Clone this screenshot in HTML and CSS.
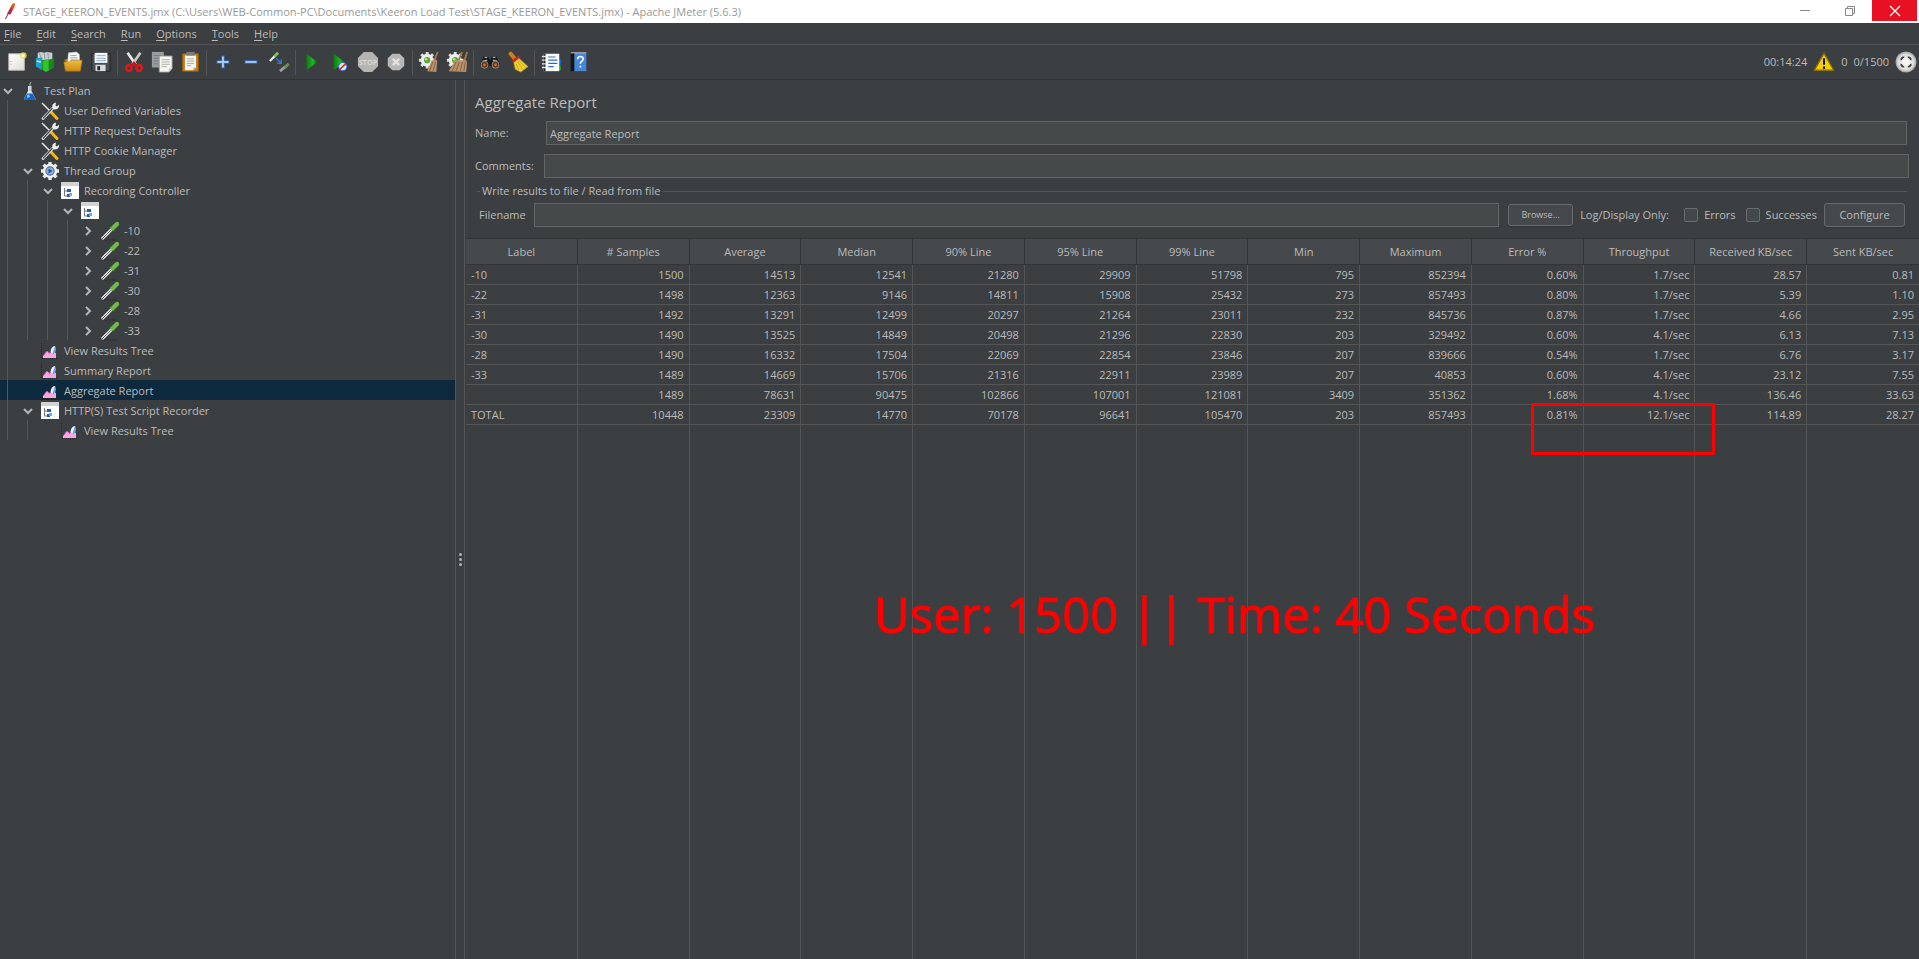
FILE: index.html
```html
<!DOCTYPE html>
<html lang="en">
<head>
<meta charset="utf-8">
<title>Apache JMeter (5.6.3)</title>
<link rel="stylesheet" href="styles.css">
</head>
<body>
<svg class="defs" aria-hidden="true">
  <defs>
    <linearGradient id="g-green" x1="0" x2="1"><stop offset="0" stop-color="#0b7a12"/><stop offset=".6" stop-color="#1fb52a"/><stop offset="1" stop-color="#0a5c10"/></linearGradient>
    <linearGradient id="g-folder" x1="0" y1="0" x2="0" y2="1"><stop offset="0" stop-color="#f0bd45"/><stop offset="1" stop-color="#c98d10"/></linearGradient>
    <linearGradient id="g-paper" x1="0" y1="0" x2="1" y2="1"><stop offset="0" stop-color="#ffffff"/><stop offset="1" stop-color="#dcdcd8"/></linearGradient>
    <linearGradient id="g-feather" x1="0" y1="1" x2="1" y2="0"><stop offset="0" stop-color="#8a2a7c"/><stop offset=".45" stop-color="#d4202e"/><stop offset="1" stop-color="#f08a24"/></linearGradient>
    <radialGradient id="g-ball"><stop offset="0" stop-color="#ffffff"/><stop offset=".75" stop-color="#dadada"/><stop offset="1" stop-color="#9a9a9a"/></radialGradient>
  </defs>
  <symbol id="i-flask" viewBox="0 0 18 20"><path d="M7 5h3.500v5l4 7.500q.5 1.500-1 1.500H4q-1.500 0-1-1.500l4-7.500z" fill="#dfe6ee"/><path d="M6 12.500h5.500l3 5q.5 1.500-1 1.500H4q-1.500 0-1-1.500z" fill="#1767c4"/><path d="M6 14l2-1 1 3-3 1z" fill="#7ab4f2"/><path d="M9 10V3l1-2" stroke="#aab4c0" stroke-width="1" fill="none"/></symbol>
  <symbol id="i-tools" viewBox="0 0 20 20"><path d="M2 2l8 8" stroke="#f0f0f0" stroke-width="1.500"/><path d="M10.500 10.500l6.500 7" stroke="#f4b90a" stroke-width="3" stroke-linecap="round"/><path d="M3 17.500l10.500-11" stroke="#e6e6e6" stroke-width="2.800" stroke-linecap="round"/><path d="M3 17.500l9.500-10.500" stroke="#45494b" stroke-width="1.200"/><path d="M12.500 6.500q-1-4 3.500-5l-.5 3 1.500 1 2-2q.5 5-4.500 5z" fill="#eee"/></symbol>
  <symbol id="i-cog" viewBox="0 0 20 20"><path d="M10 1v18M1 10h18M3.600 3.600l12.800 12.800M16.400 3.600L3.600 16.400" stroke="#e9e9e9" stroke-width="3.400"/><circle cx="10" cy="10" r="7.200" fill="#f1f1f1"/><circle cx="10" cy="10" r="4.700" fill="#5c6f92"/><circle cx="10" cy="10" r="3.600" fill="#8fb0e6"/><path d="M8.500 7.500l4 2.500-4 2.500z" fill="#1d4fa5"/></symbol>
  <symbol id="i-control" viewBox="0 0 20 20"><path d="M1 1h18v17H1z" fill="#fff"/><path d="M1 1h18v4H1z" fill="#d2d2d2"/><path d="M4.500 7v8H8M4.500 10H8" stroke="#777" fill="none"/><path d="M7 8h4v3H7zM7 13h3v3H7z" fill="#1e5fb8"/><path d="M9 12h3v3H9z" fill="#6ea6e8"/></symbol>
  <symbol id="i-sampler" viewBox="0 0 20 20"><path d="M3 19h14" stroke="#2c2f30"/><path d="M2 18L12 8" stroke="#f2f2f2" stroke-width="3"/><path d="M1.500 18.500l9.500-9.500" stroke="#666" stroke-width="1"/><path d="M10 6l4 4" stroke="#3f7a26" stroke-width="1.800"/><path d="M12.500 7.500L17 3" stroke="#73b94c" stroke-width="4.200" stroke-linecap="round"/></symbol>
  <symbol id="i-chart" viewBox="0 0 20 20"><path d="M1.500 2v15.500H17" stroke="#25282a" stroke-dasharray="1 1" fill="none"/><path d="M3 17v-2l4-5 3 2 2-2 4 2v5z" fill="#f5a9e4"/><path d="M3 15l4-5 3 3" stroke="#d04cae" fill="none"/><path d="M10.500 11q.5-5.500 4.500-6 1.500 6-1.500 8.500z" fill="#e9f2ff"/><path d="M15 5q1.500 6-1.500 8.500l-1-1z" fill="#6d9ede"/></symbol>
  <symbol id="i-down" viewBox="0 0 12 12"><path d="M2 4l4 4 4-4" fill="none" stroke="#b4b7b9" stroke-width="2"/></symbol>
  <symbol id="i-right" viewBox="0 0 12 12"><path d="M4 2l4 4-4 4" fill="none" stroke="#b4b7b9" stroke-width="2"/></symbol>
  <symbol id="i-smallcog" viewBox="0 0 24 24"><path d="M10 1v18M1 10h18M3.600 3.600l12.800 12.800M16.400 3.600L3.600 16.400" stroke="#dedede" stroke-width="3.200"/><circle cx="10" cy="10" r="7" fill="#ededed"/><circle cx="10" cy="10" r="3.400" fill="#5aa832"/><circle cx="9" cy="9" r="1.400" fill="#b5e08f"/></symbol>
</svg>

<header class="titlebar">
  <svg class="logo" viewBox="0 0 12 18"><path d="M3 12L8.500 1.500Q12 0 11 3.500L6.500 12.500z" fill="url(#g-feather)"/><path d="M4 12l-2.500 5" stroke="#6a2575" stroke-width="1"/></svg>
  <h1 class="window-title">STAGE_KEERON_EVENTS.jmx (C:\Users\WEB-Common-PC\Documents\Keeron Load Test\STAGE_KEERON_EVENTS.jmx) - Apache JMeter (5.6.3)</h1>
  <button class="win" aria-label="Minimize"><svg viewBox="0 0 12 12"><path d="M1 5.500h10" stroke="#888"/></svg></button>
  <button class="win" aria-label="Restore"><svg viewBox="0 0 12 12"><path d="M1.500 3.500h7v7h-7zM3.500 3.500v-2h7v7h-2" fill="none" stroke="#888"/></svg></button>
  <button class="win close" aria-label="Close"><svg viewBox="0 0 12 12"><path d="M1 1l10 10M11 1L1 11" stroke="#fff" stroke-width="1.300"/></svg></button>
</header>

<nav class="menu">
  <button><u>F</u>ile</button><button><u>E</u>dit</button><button><u>S</u>earch</button><button><u>R</u>un</button><button><u>O</u>ptions</button><button><u>T</u>ools</button><button><u>H</u>elp</button>
</nav>

<div class="toolbar">
  <button aria-label="New"><svg viewBox="0 0 24 24"><path d="M3 3h17v18H3z" fill="url(#g-paper)" stroke="#b9b9b5"/><path d="M5.500 11v1M5.500 14v1" stroke="#999"/><circle cx="19" cy="5" r="3.600" fill="#f3e04a" opacity=".8"/><circle cx="19" cy="5" r="1.700" fill="#fffbd0"/></svg></button>
  <button aria-label="Templates"><svg viewBox="0 0 24 24"><path d="M4 2l4-1 3 1 3-1 6 1v8H4z" fill="#c9ced2"/><path d="M6 2l2 7M11 2l1 7M15 2l1 7" stroke="#8d979e"/><path d="M2 8l7-1v14l-7-4z" fill="#1b9fcf"/><path d="M3 10l5 1v2l-5-1z" fill="#a7e2f6"/><path d="M8 10l8-1v13l-8-2z" fill="#1d9c22"/><path d="M10 11l11-3v10l-8 5-3-2z" fill="#36c12f"/><path d="M16 10l5-2v10l-5 3z" fill="#158a1c"/></svg></button>
  <button aria-label="Open"><svg viewBox="0 0 24 24"><path d="M3 9h3l1-2h12l1 14H3z" fill="#b97d0c"/><path d="M7 2l9-1 3 3v10H6z" fill="#fafafa" stroke="#bbb" stroke-width=".6"/><path d="M9 5h7M9 7.500h8M9 10h8" stroke="#999" stroke-width="1"/><path d="M2 12h6l2-2h12l-2 12H4z" fill="url(#g-folder)" stroke="#a8720b" stroke-width=".6"/></svg></button>
  <button aria-label="Save"><svg viewBox="0 0 24 24"><path d="M2 3h20v19H4l-2-2z" fill="#4b4e52" stroke="#222"/><path d="M5 2h14v11H5z" fill="#f3f6fa"/><path d="M7 5h10M7 8h10M7 10.500h10" stroke="#8caad0" stroke-width="1"/><path d="M6 15h11v7H6z" fill="#d9dcdf"/><path d="M8 16.500h3V21H8z" fill="#26282a"/></svg></button>
  <span class="sep"></span>
  <button aria-label="Cut"><svg viewBox="0 0 24 24"><path d="M5 2l9 13" stroke="#e9e9e9" stroke-width="3"/><path d="M19 2l-9 13" stroke="#c9c9c9" stroke-width="3"/><ellipse cx="6.500" cy="18.500" rx="3" ry="3.300" fill="none" stroke="#e01818" stroke-width="2.600"/><ellipse cx="17.500" cy="18.500" rx="3" ry="3.300" fill="none" stroke="#e01818" stroke-width="2.600"/><path d="M9 16l3-3 3 3" stroke="#c01010" stroke-width="2.400" fill="none"/></svg></button>
  <button aria-label="Copy"><svg viewBox="0 0 24 24"><path d="M1 1h13v17H1z" fill="#9a9c9d"/><path d="M3 5h9M3 8h6M3 11h5M3 14h5" stroke="#77797b"/><path d="M9 5.500h14V19l-3.500 4H9z" fill="#f5f5f2" stroke="#999"/><path d="M11.500 9.500h9M11.500 12h9M11.500 14.500h9M11.500 17h6" stroke="#a9a9a9"/><path d="M19.500 23v-4H23z" fill="#c4c4c4"/></svg></button>
  <button aria-label="Paste"><svg viewBox="0 0 24 24"><path d="M4 3h17v19H4z" fill="#c4811c" stroke="#99600c"/><path d="M6.500 5h12v13l-3 3h-9z" fill="#f6f6f3"/><path d="M8 1h9v4H8z" fill="#7b7e78"/><path d="M8.500 8.500h8M8.500 11h8M8.500 13.500h8M8.500 16h5" stroke="#a5a5a5"/><path d="M15.500 21v-3h3z" fill="#bbb"/></svg></button>
  <span class="sep"></span>
  <button aria-label="Expand all"><svg viewBox="0 0 24 24"><path d="M12 5v14M5 12h14" stroke="#3768b0" stroke-width="4"/><path d="M12 6v12M6 12h12" stroke="#a9ccf6" stroke-width="2"/></svg></button>
  <button aria-label="Collapse all"><svg viewBox="0 0 24 24"><path d="M5 12h14" stroke="#3768b0" stroke-width="4"/><path d="M6 12h12" stroke="#a9ccf6" stroke-width="2"/></svg></button>
  <button aria-label="Toggle"><svg viewBox="0 0 24 24"><path d="M2 11l6-6" stroke="#eee" stroke-width="2.400"/><path d="M7 6l4-4" stroke="#7cc057" stroke-width="3.200"/><path d="M9 8l5 5M14.500 9v4.500H10" stroke="#2f78d8" stroke-width="1.500" fill="none"/><path d="M13 22l6-5" stroke="#999c9e" stroke-width="3"/><path d="M18.500 18l4-4" stroke="#6b9158" stroke-width="3.200"/></svg></button>
  <span class="sep"></span>
  <button aria-label="Start"><svg viewBox="0 0 24 24"><path d="M6 3l12 9-12 9z" fill="url(#g-green)"/></svg></button>
  <button aria-label="Start no pauses"><svg viewBox="0 0 24 24"><path d="M5 3l12 9-12 9z" fill="url(#g-green)"/><circle cx="15" cy="17" r="4.500" fill="#d6e6fb" stroke="#2a6ed0" stroke-width="1"/><path d="M11.500 20.500l7-7" stroke="#e02222" stroke-width="1.600"/></svg></button>
  <button aria-label="Stop"><svg viewBox="0 0 24 24"><path d="M7.500 1h9L23 7.500v9L16.500 23h-9L1 16.500v-9z" fill="#b4b4b4"/><text x="12" y="15" class="stop-text">STOP</text></svg></button>
  <button aria-label="Shutdown"><svg viewBox="0 0 24 24"><path d="M8 3h8l5 5v8l-5 5H8l-5-5V8z" fill="#b7b7b7"/><path d="M8.500 8.500l7 7M15.500 8.500l-7 7" stroke="#e2e2e2" stroke-width="2.600"/></svg></button>
  <span class="sep"></span>
  <button aria-label="Clear"><svg viewBox="0 0 24 24"><use href="#i-smallcog"/><path d="M21.500 1l-4 10" stroke="#a37846" stroke-width="2"/><path d="M15 10h6l-1 13-10-1z" fill="#b8926a"/><path d="M16 12l-3.500 10M19 12l-2.500 10" stroke="#84603a"/></svg></button>
  <button aria-label="Clear all"><svg viewBox="0 0 24 24"><use href="#i-smallcog"/><path d="M17.500 1l-3.500 9M23 1l-3 10" stroke="#a37846" stroke-width="2"/><path d="M10 10h12l1 3-1 10-19-1z" fill="#b8926a"/><path d="M11 12L6.500 22M14.500 12l-3.500 10M18 12l-2.500 10M21 12l-1.500 10" stroke="#84603a"/></svg></button>
  <span class="sep"></span>
  <button aria-label="Search"><svg viewBox="0 0 24 24"><path d="M5 6h5l1 3h2l1-3h5l4 9-5 4-5-3h-2l-5 3-5-4z" fill="#17191a"/><path d="M6 7h3M15 7h3M4 11l5-1M15 10l5 1" stroke="#a9adb0" stroke-width="1.300"/><circle cx="6" cy="15" r="3.800" fill="#6b3717" stroke="#8a8e91"/><circle cx="18" cy="15" r="3.800" fill="#6b3717" stroke="#8a8e91"/><circle cx="6" cy="15" r="1.500" fill="#c96f36"/><circle cx="18" cy="15" r="1.500" fill="#c96f36"/></svg></button>
  <button aria-label="Reset search"><svg viewBox="0 0 24 24"><path d="M4 3l5 6" stroke="#cb8119" stroke-width="4.500" stroke-linecap="round"/><path d="M7 11l5-4 11 10-8 6-6-3z" fill="#f0d131" stroke="#b79413" stroke-width=".8"/><path d="M12 12l5 8M13 10l7 8M10 14l3 7" stroke="#c5a41c"/><path d="M6 12l7-6" stroke="#d3201c" stroke-width="3"/></svg></button>
  <span class="sep"></span>
  <button aria-label="Function helper"><svg viewBox="0 0 24 24"><path d="M20 9h3v6h-3z" fill="#1462cf"/><path d="M20 16h3v5h-3z" fill="#17992a"/><path d="M4 3h17v19H4z" fill="#fff"/><path d="M4 3h2v19H4z" fill="#1d1e20"/><path d="M2 6h5M2 10h5M2 14h5M2 18h5" stroke="#e8e8e8" stroke-width="1.500"/><path d="M9 6.500h8M9 10h10M9 13.500h10M9 17h6" stroke="#2c6cc8" stroke-width="1.200"/></svg></button>
  <button aria-label="Help"><svg viewBox="0 0 24 24"><path d="M3 2h4v20H3z" fill="#131517"/><path d="M7 2h13v20H7z" fill="#4686da"/><path d="M3 2h17" stroke="#ccd3da"/><path d="M10.500 9q0-3 3-3t3 2.700q0 1.800-1.800 2.800-1.200.7-1.200 2.500M13.500 16v2" fill="none" stroke="#fff" stroke-width="1.700"/></svg></button>
  <div class="status">
    <span>00:14:24</span>
    <svg viewBox="0 0 24 24"><path d="M12 2.500L22.500 21h-21z" fill="#f3cc0a" stroke="#8c7200" stroke-width="1.500" stroke-linejoin="round"/><path d="M12 8v7M12 17v2.500" stroke="#151515" stroke-width="2.200"/></svg>
    <span>0</span>
    <span>0/1500</span>
    <svg viewBox="0 0 24 24"><circle cx="12" cy="12" r="11.500" fill="url(#g-ball)"/><path d="M6.500 10V8L8 6.500h2zM14 6.500h2L17.500 8v2zM17.500 14v2L16 17.500h-2zM10 17.500H8L6.500 16v-2z" fill="#3e4143" stroke="#3e4143"/></svg>
  </div>
</div>

<main class="main">
  <ul class="tree">
    <li><svg class="tw"><use href="#i-down"/></svg><svg class="ic"><use href="#i-flask"/></svg>Test Plan</li>
    <li><i></i><svg class="ic"><use href="#i-tools"/></svg>User Defined Variables</li>
    <li><i></i><svg class="ic"><use href="#i-tools"/></svg>HTTP Request Defaults</li>
    <li><i></i><svg class="ic"><use href="#i-tools"/></svg>HTTP Cookie Manager</li>
    <li><i></i><svg class="tw"><use href="#i-down"/></svg><svg class="ic"><use href="#i-cog"/></svg>Thread Group</li>
    <li><i></i><i></i><svg class="tw"><use href="#i-down"/></svg><svg class="ic"><use href="#i-control"/></svg>Recording Controller</li>
    <li><i></i><i></i><i></i><svg class="tw"><use href="#i-down"/></svg><svg class="ic"><use href="#i-control"/></svg></li>
    <li><i></i><i></i><i></i><i></i><svg class="tw"><use href="#i-right"/></svg><svg class="ic"><use href="#i-sampler"/></svg>-10</li>
    <li><i></i><i></i><i></i><i></i><svg class="tw"><use href="#i-right"/></svg><svg class="ic"><use href="#i-sampler"/></svg>-22</li>
    <li><i></i><i></i><i></i><i></i><svg class="tw"><use href="#i-right"/></svg><svg class="ic"><use href="#i-sampler"/></svg>-31</li>
    <li><i></i><i></i><i></i><i></i><svg class="tw"><use href="#i-right"/></svg><svg class="ic"><use href="#i-sampler"/></svg>-30</li>
    <li><i></i><i></i><i></i><i></i><svg class="tw"><use href="#i-right"/></svg><svg class="ic"><use href="#i-sampler"/></svg>-28</li>
    <li><i></i><i></i><i></i><i></i><svg class="tw"><use href="#i-right"/></svg><svg class="ic"><use href="#i-sampler"/></svg>-33</li>
    <li><i></i><svg class="ic"><use href="#i-chart"/></svg>View Results Tree</li>
    <li><i></i><svg class="ic"><use href="#i-chart"/></svg>Summary Report</li>
    <li class="selected"><i></i><svg class="ic"><use href="#i-chart"/></svg>Aggregate Report</li>
    <li><i></i><svg class="tw"><use href="#i-down"/></svg><svg class="ic"><use href="#i-control"/></svg>HTTP(S) Test Script Recorder</li>
    <li><i></i><i></i><svg class="ic"><use href="#i-chart"/></svg>View Results Tree</li>
  </ul>

  <div class="splitter"><b></b><b></b><b></b></div>

  <section class="panel">
    <form class="form">
      <h2>Aggregate Report</h2>
      <div class="field name"><label for="name">Name:</label><input type="text" id="name" value="Aggregate Report"></div>
      <div class="field comments"><label for="comments">Comments:</label><input type="text" id="comments"></div>
      <fieldset>
        <legend>Write results to file / Read from file</legend>
        <div class="file-row">
          <label for="filename">Filename</label><input type="text" id="filename">
          <button type="button" class="btn browse">Browse...</button>
          <span class="log">Log/Display Only:</span>
          <label class="check"><input type="checkbox">Errors</label>
          <label class="check"><input type="checkbox">Successes</label>
          <button type="button" class="btn configure">Configure</button>
        </div>
      </fieldset>
    </form>
    <div class="results">
      <table>
        <thead><tr><th>Label</th><th># Samples</th><th>Average</th><th>Median</th><th>90% Line</th><th>95% Line</th><th>99% Line</th><th>Min</th><th>Maximum</th><th>Error %</th><th>Throughput</th><th>Received KB/sec</th><th>Sent KB/sec</th></tr></thead>
        <tbody>
          <tr><td>-10</td><td>1500</td><td>14513</td><td>12541</td><td>21280</td><td>29909</td><td>51798</td><td>795</td><td>852394</td><td>0.60%</td><td>1.7/sec</td><td>28.57</td><td>0.81</td></tr>
          <tr><td>-22</td><td>1498</td><td>12363</td><td>9146</td><td>14811</td><td>15908</td><td>25432</td><td>273</td><td>857493</td><td>0.80%</td><td>1.7/sec</td><td>5.39</td><td>1.10</td></tr>
          <tr><td>-31</td><td>1492</td><td>13291</td><td>12499</td><td>20297</td><td>21264</td><td>23011</td><td>232</td><td>845736</td><td>0.87%</td><td>1.7/sec</td><td>4.66</td><td>2.95</td></tr>
          <tr><td>-30</td><td>1490</td><td>13525</td><td>14849</td><td>20498</td><td>21296</td><td>22830</td><td>203</td><td>329492</td><td>0.60%</td><td>4.1/sec</td><td>6.13</td><td>7.13</td></tr>
          <tr><td>-28</td><td>1490</td><td>16332</td><td>17504</td><td>22069</td><td>22854</td><td>23846</td><td>207</td><td>839666</td><td>0.54%</td><td>1.7/sec</td><td>6.76</td><td>3.17</td></tr>
          <tr><td>-33</td><td>1489</td><td>14669</td><td>15706</td><td>21316</td><td>22911</td><td>23989</td><td>207</td><td>40853</td><td>0.60%</td><td>4.1/sec</td><td>23.12</td><td>7.55</td></tr>
          <tr><td></td><td>1489</td><td>78631</td><td>90475</td><td>102866</td><td>107001</td><td>121081</td><td>3409</td><td>351362</td><td>1.68%</td><td>4.1/sec</td><td>136.46</td><td>33.63</td></tr>
          <tr><td>TOTAL</td><td>10448</td><td>23309</td><td>14770</td><td>70178</td><td>96641</td><td>105470</td><td>203</td><td>857493</td><td>0.81%</td><td>12.1/sec</td><td>114.89</td><td>28.27</td></tr>
          <tr class="filler"><td></td><td></td><td></td><td></td><td></td><td></td><td></td><td></td><td></td><td></td><td></td><td></td><td></td></tr>
        </tbody>
      </table>
      <div class="mark"></div>
      <p class="note">User: 1500 || Time: 40 Seconds</p>
    </div>
  </section>
</main>
</body>
</html>
```
FILE: styles.css
```css
* { box-sizing: border-box; }

body {
  margin: 0;
  height: 100vh;
  display: flex;
  flex-direction: column;
  overflow: hidden;
  background: #3c3f41;
  color: #bbbbbb;
  font: 11px/20px "Open Sans", sans-serif;
}

button, input { font: inherit; color: inherit; margin: 0; }
button { background: none; border: 0; padding: 0; }
svg { display: block; flex: none; }
.defs { position: absolute; width: 0; height: 0; }

.titlebar {
  display: flex;
  align-items: flex-start;
  height: 23px;
  padding-right: 2px;
  background: #fff;
  color: #999;
}
.logo { width: 12px; height: 18px; margin: 2px 7px 0 4px; }
.window-title { flex: 1; margin: 2px 0 0; font-size: 11px; font-weight: 400; white-space: nowrap; }
.win { width: 45px; height: 21px; display: grid; place-items: center; }
.win svg { width: 12px; height: 12px; }
.close { background: #e81123; }

.menu {
  display: flex;
  gap: 15px;
  height: 22px;
  padding-left: 4px;
  border-bottom: 1px solid #555555;
}
.menu button { line-height: 21px; }
.menu u { text-underline-offset: 2px; }

.toolbar {
  display: flex;
  align-items: center;
  height: 35px;
  padding: 0 2px 0 3px;
  border-bottom: 1px solid #323232;
}
.toolbar button { width: 28px; height: 28px; display: grid; place-items: center; }
.toolbar svg { width: 22px; height: 22px; }
.sep { width: 3px; height: 25px; margin-left: 2px; border-left: 1px solid #555555; }
.status { margin-left: auto; display: flex; align-items: center; gap: 6px; }
.stop-text { font: 700 8px "Open Sans", sans-serif; fill: #d6d6d6; text-anchor: middle; }

.main { flex: 1; display: flex; min-height: 0; }

.tree {
  width: 455px;
  flex: none;
  margin: 0;
  padding: 0;
  list-style: none;
}
.tree li { display: flex; align-items: center; height: 20px; padding-top: 2px; white-space: nowrap; }
.tree i {
  width: 20px;
  flex: none;
  align-self: stretch;
  margin-top: -2px;
  background: linear-gradient(#555759, #555759) 7px 0 / 1px 100% no-repeat;
}
.tree .tw { width: 12px; height: 12px; margin: 0 6px 0 2px; }
.tree .ic { width: 20px; height: 20px; margin-right: 4px; }
.tree i + .ic { margin-left: 20px; }
.tree .selected { background: #0d293e; }

.splitter {
  width: 10px;
  flex: none;
  display: flex;
  flex-direction: column;
  align-items: center;
  justify-content: center;
  gap: 2px;
  padding-top: 80px;
  border: solid #555555;
  border-width: 0 1px;
}
.splitter b { width: 3px; height: 3px; border-radius: 50%; background: #b0b3b5; }

.panel { flex: 1; min-width: 0; display: flex; flex-direction: column; padding-left: 1px; }
.form { padding: 10px 12px 0 9px; }
.form h2 { margin: 0 0 7px; font-size: 15px; line-height: 24px; font-weight: 400; }
.form input[type="text"] {
  flex: 1;
  min-width: 0;
  height: 24px;
  padding: 0 3px;
  border: 1px solid #646464;
  background: #45494a;
}
.field { display: flex; align-items: center; margin-bottom: 9px; }
.field.name label { width: 71px; }
.field.comments label { width: 69px; }
.field.comments { margin-right: -2px; margin-bottom: 3px; }

fieldset { margin: 0 0 0 2px; padding: 0 2px 11px; border: 0 solid #555555; border-top-width: 1px; min-width: 0; }
legend { padding: 0 2px; margin-left: 1px; line-height: 20px; }
.file-row { display: flex; align-items: center; padding-top: 2px; }
.file-row > label:first-child { width: 55px; }
.btn { border: 1px solid #686b6d; border-radius: 3px; background: #45494c; box-shadow: 0 1px 1px #333638; }
.browse { width: 65px; height: 22px; margin: 0 7px 0 9px; font-size: 9px; line-height: 18px; }
.log { width: 104px; }
.check { display: flex; align-items: center; }
.check input {
  appearance: none;
  width: 14px;
  height: 14px;
  margin-right: 6px;
  border: 1px solid #6b6b6b;
  border-radius: 2px;
  background: #43494a;
}
.check + .check { margin: 0 7px 0 10px; }
.configure { width: 81px; height: 24px; }

.results { flex: 1; min-height: 0; position: relative; }
table { width: 100%; height: 100%; table-layout: fixed; border-collapse: separate; border-spacing: 0; }
th, td { padding: 0; border: 0 solid #555555; overflow: hidden; white-space: nowrap; font-weight: 400; }
th {
  height: 27px;
  background: #45494b;
  border-color: #323435;
  border-width: 1px 1px 1px 0;
  text-align: center;
}
td { height: 20px; line-height: 19px; padding: 0 5px; border-width: 0 1px 1px 0; text-align: right; }
td:first-child { text-align: left; }
th:last-child, td:last-child { border-right-width: 0; }
.filler td { height: auto; border-bottom-width: 0; }

.mark {
  position: absolute;
  top: 165px;
  right: 204px;
  width: 184px;
  height: 52px;
  border: 3px solid #f00;
  border-radius: 2px;
}
.note {
  position: absolute;
  top: 340px;
  right: 324px;
  margin: 0;
  color: #f00;
  font-size: 49px;
  line-height: 72px;
  white-space: nowrap;
  -webkit-text-stroke: 1px #f00;
}
```
